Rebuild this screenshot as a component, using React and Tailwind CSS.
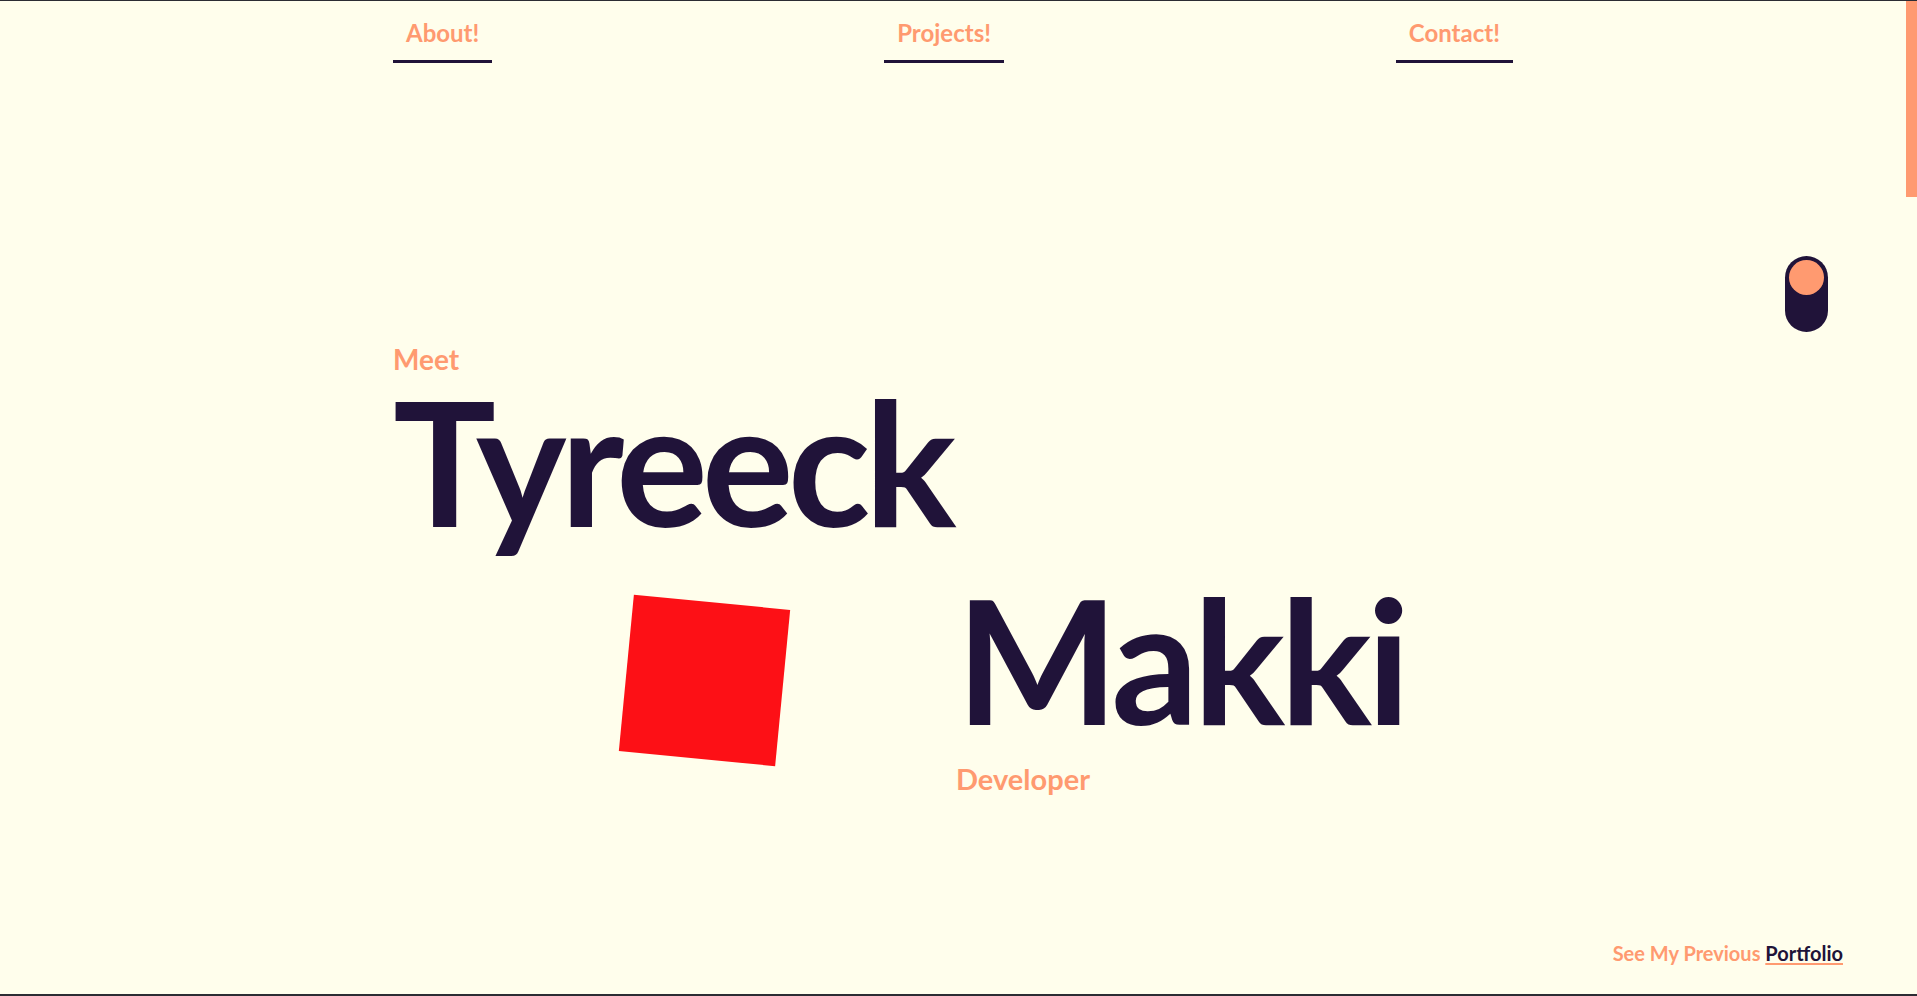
import { useState } from "react";

const links = ["About!", "Projects!", "Contact!"];

function App() {
  const [dark, setDark] = useState(false);

  return (
    <div className="h-screen flex flex-col bg-[#fffeec] border-t border-b-2 border-[#2c2c33] font-['Lato',sans-serif] overflow-hidden">
      <div className="flex-1 flex min-h-0">
        {/* Main */}
        <div className="relative flex-1 flex flex-col">
          {/* Nav */}
          <nav className="w-[1120px] mx-auto pt-[16px] flex justify-between">
            {links.map((l) => (
              <a
                key={l}
                href="#"
                className="px-[13px] pb-[11px] border-b-[3px] border-[#201339] text-[24px] leading-[32px] font-bold text-[#ff9a70]"
              >
                {l}
              </a>
            ))}
          </nav>

          {/* Toggle */}
          <button
            onClick={() => setDark(!dark)}
            className={`absolute top-[255px] right-[78px] w-[43px] h-[76px] rounded-full bg-[#201339] p-[4px] flex flex-col ${
              dark ? "justify-end" : "justify-start"
            }`}
          >
            <span className="block w-[35px] h-[35px] rounded-full bg-[#ff9a70]" />
          </button>

          {/* Hero */}
          <div className="w-[1120px] mx-auto mt-[282px]">
            <p className="text-[28px] leading-none font-bold text-[#ff9a70]">Meet</p>
            <h1 className="mt-[2px] text-[172px] leading-none font-bold tracking-[-0.035em] text-[#201339]">
              Tyreeck
            </h1>
            <div className="flex">
              <div className="w-[563px] shrink-0 pt-[55px] pl-[233px]">
                <div className="w-[157px] h-[157px] bg-[#fd1016] rotate-[5.5deg]" />
              </div>
              <div className="mt-[26px]">
                <h1 className="text-[172px] leading-none font-bold tracking-[-0.03em] text-[#201339]">
                  Makki
                </h1>
                <p className="mt-[19px] text-[29px] leading-none font-bold text-[#ff9a70]">Developer</p>
              </div>
            </div>
          </div>

          {/* Footer */}
          <div className="mt-auto flex justify-end pr-[63px] pb-[31px]">
            <p className="text-[20px] leading-none font-bold text-[#ff9a70]">
              See My Previous{" "}
              <a href="#" className="text-[#201339] underline decoration-[#ff9a70] decoration-2 underline-offset-2">
                Portfolio
              </a>
            </p>
          </div>
        </div>

        {/* Scroll indicator */}
        <div className="w-[11px] shrink-0">
          <div className="h-[196px] bg-[#ff9a70]" />
        </div>
      </div>
    </div>
  );
}

export default App;
